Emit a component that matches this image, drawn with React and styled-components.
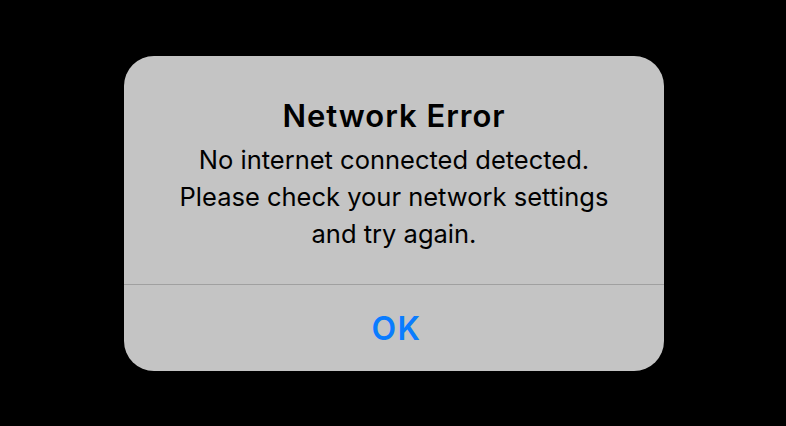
import React from 'react'
import styled, { createGlobalStyle } from 'styled-components'

const GlobalStyle = createGlobalStyle`
  html, body {
    margin: 0;
    padding: 0;
    background: #000;
  }
  body {
    font-family: Inter, "Noto Sans", "Liberation Sans", sans-serif;
    -webkit-font-smoothing: antialiased;
  }
`

const Screen = styled.div`
  width: 786px;
  height: 426px;
  background: #000;
  display: flex;
  justify-content: center;
  padding: 56px 0 0 2px;
  box-sizing: border-box;
`

const Alert = styled.div`
  width: 540px;
  height: 315px;
  background: #c4c4c4;
  border-radius: 30px;
  display: flex;
  flex-direction: column;
  overflow: hidden;
`

const Body = styled.div`
  padding: 42px 20px 32px;
  display: flex;
  flex-direction: column;
  align-items: center;
  text-align: center;
  gap: 7px;
  border-bottom: 1px solid #a0a0a0;
`

const Title = styled.h2`
  margin: 0;
  font-size: 31px;
  line-height: 36px;
  font-weight: 600;
  letter-spacing: 1px;
  color: #000;
`

const Message = styled.p`
  margin: 0;
  font-size: 25.5px;
  line-height: 37px;
  font-weight: 400;
  color: #000;
`

const Action = styled.button`
  flex: 1;
  border: 0;
  padding: 0 0 0 5px;
  background: transparent;
  font-family: inherit;
  font-size: 32px;
  font-weight: 600;
  letter-spacing: 1.5px;
  color: #0a7cff;
  cursor: pointer;
`

const App = () => {
  return (
    <>
      <GlobalStyle />
      <Screen>
        <Alert>
          <Body>
            <Title>Network Error</Title>
            <Message>
              No internet connected detected.
              <br />
              Please check your network settings
              <br />
              and try again.
            </Message>
          </Body>
          <Action>OK</Action>
        </Alert>
      </Screen>
    </>
  )
}

export default App
